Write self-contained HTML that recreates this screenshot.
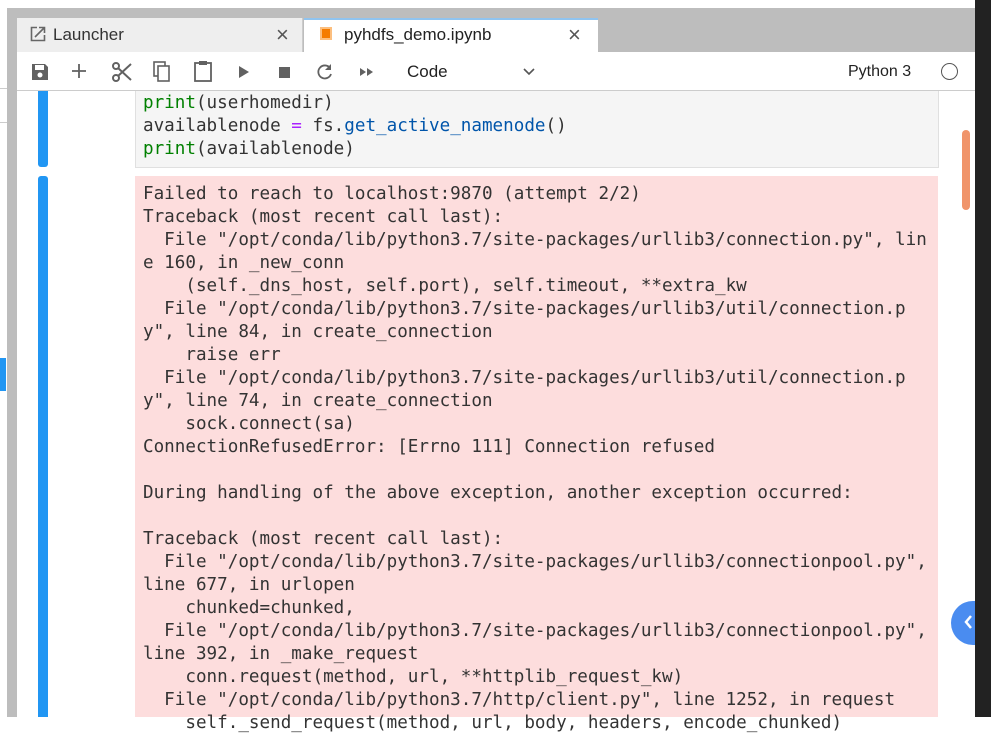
<!DOCTYPE html>
<html><head><style>
body{margin:0;width:991px;height:717px;overflow:hidden;background:#fff;position:relative;font-family:"Liberation Sans",sans-serif}
.a{position:absolute}
.mono{font-family:"DejaVu Sans Mono","Liberation Mono",monospace;font-size:17.6px;line-height:23px;white-space:pre;color:#333}
</style></head><body>
<div class="a" style="left:0;top:0;width:991px;height:8px;background:#fff"></div>
<div class="a" style="left:0;top:8px;width:975px;height:709px;background:#bdbdbd"></div>
<div class="a" style="left:0;top:8px;width:7px;height:709px;background:#fff"></div>
<div class="a" style="left:0;top:88px;width:7px;height:1px;background:#ccc"></div>
<div class="a" style="left:0;top:122px;width:7px;height:1px;background:#ccc"></div>
<div class="a" style="left:0;top:358px;width:6px;height:33px;background:#2196f3"></div>
<div class="a" style="left:975px;top:0;width:16px;height:717px;background:#222"></div>
<!-- tabs -->
<div class="a" style="left:17px;top:18px;width:285px;height:34px;background:#eee;border-right:1px solid #ccc"></div>
<svg class="a" style="left:30px;top:26px" width="16" height="16"><path d="M7 1.5H1.5v13h13V9" fill="none" stroke="#666" stroke-width="1.6"/><path d="M5 11l9-9M9 1.5h5.5V7" fill="none" stroke="#666" stroke-width="1.6"/></svg>
<div class="a" style="left:53px;top:25px;font-size:17px;color:#333">Launcher</div>
<div class="a" style="left:276px;top:22px;font-size:22px;color:#555">×</div>
<div class="a" style="left:304px;top:18px;width:294px;height:34px;background:#fff;border-top:2px solid #90c4f0;box-sizing:border-box"></div>
<div class="a" style="left:320px;top:27px;width:12px;height:13px;background:#f57c00;border:2px solid #fcbf7f;box-sizing:border-box"></div>
<div class="a" style="left:344px;top:25px;font-size:17px;color:#222">pyhdfs_demo.ipynb</div>
<div class="a" style="left:568px;top:22px;font-size:22px;color:#555">×</div>
<!-- toolbar -->
<div class="a" style="left:17px;top:52px;width:958px;height:38px;background:#fff;border-bottom:1px solid #ccc"></div>
<svg class="a" style="left:30px;top:62px" width="20" height="20" viewBox="0 0 20 20"><path d="M2 2h13l3 3v13H2z" fill="#616161"/><rect x="5" y="3" width="9" height="5" fill="#fff"/><circle cx="10" cy="13" r="2.5" fill="#fff"/></svg>
<svg class="a" style="left:71px;top:63px" width="16" height="16"><path d="M8 1v14M1 8h14" stroke="#616161" stroke-width="1.8"/></svg>
<svg class="a" style="left:111px;top:61px" width="22" height="22" viewBox="0 0 22 22"><circle cx="5" cy="5" r="3" fill="none" stroke="#616161" stroke-width="2"/><circle cx="5" cy="17" r="3" fill="none" stroke="#616161" stroke-width="2"/><path d="M7 7l13 12M7 15L20 3" stroke="#616161" stroke-width="2"/></svg>
<svg class="a" style="left:152px;top:61px" width="20" height="22"><rect x="2" y="1" width="11" height="14" fill="none" stroke="#616161" stroke-width="1.6"/><rect x="6" y="5" width="11" height="15" fill="#fff" stroke="#616161" stroke-width="1.6"/></svg>
<svg class="a" style="left:193px;top:60px" width="20" height="22"><rect x="2" y="3" width="16" height="18" fill="none" stroke="#616161" stroke-width="1.8"/><rect x="6" y="1" width="8" height="4" fill="#616161"/></svg>
<svg class="a" style="left:238px;top:65px" width="12" height="14"><path d="M1 1L11 7L1 13z" fill="#616161"/></svg>
<div class="a" style="left:279px;top:67px;width:11px;height:11px;background:#616161"></div>
<svg class="a" style="left:316px;top:63px" width="18" height="18" viewBox="0 0 18 18"><path d="M14 5A6.5 6.5 0 1 0 15 11" fill="none" stroke="#616161" stroke-width="1.8"/><path d="M15 1v6h-6z" fill="#616161"/></svg>
<svg class="a" style="left:359px;top:67px" width="16" height="10"><path d="M1 1l6 4-6 4zM8 1l6 4-6 4z" fill="#616161"/></svg>
<div class="a" style="left:407px;top:62px;font-size:17px;color:#222">Code</div>
<svg class="a" style="left:522px;top:67px" width="14" height="10"><path d="M2 2l5 5 5-5" fill="none" stroke="#555" stroke-width="1.6"/></svg>
<div class="a" style="left:848px;top:63px;font-size:16px;color:#222">Python 3</div>
<div class="a" style="left:941px;top:63px;width:15px;height:15px;border:1.5px solid #555;border-radius:50%"></div>
<!-- content -->
<div class="a" style="left:17px;top:91px;width:958px;height:626px;background:#fff"></div>
<div class="a" style="left:38px;top:91px;width:10px;height:76px;background:#2196f3;border-radius:0 0 3px 3px"></div>
<div class="a" style="left:38px;top:176px;width:10px;height:541px;background:#2196f3;border-radius:3px 3px 0 0"></div>
<div class="a" style="left:135px;top:91px;width:802px;height:76px;background:#f5f5f5;border:1px solid #e0e0e0;border-top:none"></div>
<div class="a mono" style="left:143px;top:92px"><span style="color:#008000">print</span>(userhomedir)
availablenode <span style="color:#aa22ff">=</span> fs.<span style="color:#0055aa">get_active_namenode</span>()
<span style="color:#008000">print</span>(availablenode)</div>
<div class="a" style="left:135px;top:176px;width:803px;height:541px;background:#fddddd"></div>
<div class="a mono" style="left:143px;top:183px">Failed to reach to localhost:9870 (attempt 2/2)
Traceback (most recent call last):
  File "/opt/conda/lib/python3.7/site-packages/urllib3/connection.py", lin
e 160, in _new_conn
    (self._dns_host, self.port), self.timeout, **extra_kw
  File "/opt/conda/lib/python3.7/site-packages/urllib3/util/connection.p
y", line 84, in create_connection
    raise err
  File "/opt/conda/lib/python3.7/site-packages/urllib3/util/connection.p
y", line 74, in create_connection
    sock.connect(sa)
ConnectionRefusedError: [Errno 111] Connection refused

During handling of the above exception, another exception occurred:

Traceback (most recent call last):
  File "/opt/conda/lib/python3.7/site-packages/urllib3/connectionpool.py",
line 677, in urlopen
    chunked=chunked,
  File "/opt/conda/lib/python3.7/site-packages/urllib3/connectionpool.py",
line 392, in _make_request
    conn.request(method, url, **httplib_request_kw)
  File "/opt/conda/lib/python3.7/http/client.py", line 1252, in request
    self._send_request(method, url, body, headers, encode_chunked)</div>
<div class="a" style="left:962px;top:130px;width:8px;height:80px;background:#f0946a;border-radius:4px"></div>
<div class="a" style="left:951px;top:601px;width:40px;height:44px;background:#4a8cf0;border-radius:22px 0 0 22px"></div>
<svg class="a" style="left:963px;top:614px" width="10" height="16"><path d="M8 2L3 8l5 6" fill="none" stroke="#fff" stroke-width="2.5"/></svg>
<div class="a" style="left:975px;top:601px;width:16px;height:44px;background:#222"></div>
</body></html>
